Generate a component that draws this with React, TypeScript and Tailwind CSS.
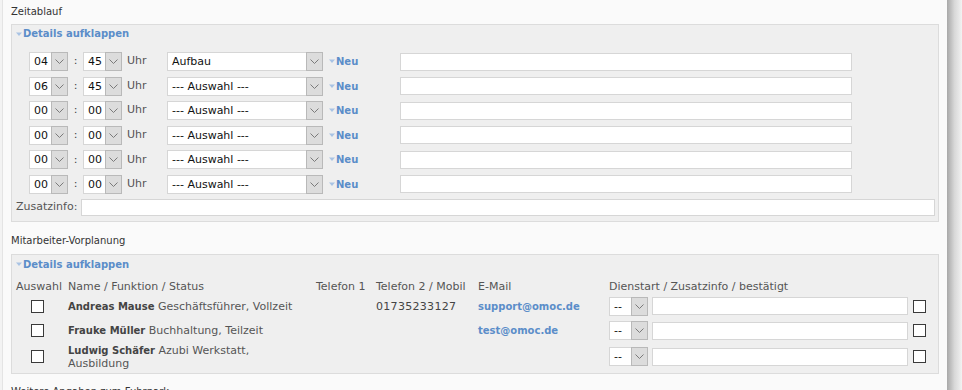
import React from "react";

const Chevron = () => (
  <svg width="9" height="5" viewBox="0 0 9 5" fill="none">
    <path d="M0.5 0.5 L4.5 4.5 L8.5 0.5" stroke="#7a7a7a" strokeWidth="1" />
  </svg>
);

function Sel({ w, text, h = 19 }: { w: number; text: string; h?: number }) {
  return (
    <div
      className="flex shrink-0 border border-[#d6d6d6] bg-white"
      style={{ width: w, height: h }}
    >
      <span className="flex-1 pl-[4px] text-[11px] leading-[17px] text-[#111] whitespace-nowrap overflow-hidden">
        {text}
      </span>
      <div className="w-[17px] -my-px -mr-px flex items-center justify-center border border-[#b9b9b9] bg-[#dcdcdc]">
        <Chevron />
      </div>
    </div>
  );
}

const Arrow = () => (
  <svg width="6" height="5" viewBox="0 0 6 5" className="mr-[1px]">
    <path d="M0 0.5 L3 4 L6 0.5 Z" fill="#a9c3e4" />
  </svg>
);

function Details() {
  return (
    <div className="flex items-center h-[12px] text-[10px] font-bold leading-[12px] text-[#5b8dc9]">
      <Arrow />
      <span>Details aufklappen</span>
    </div>
  );
}

const Box = () => (
  <div className="w-[13px] h-[13px] shrink-0 border border-[#3a3a3a] bg-white" />
);

const timeRows = [
  ["04", "45", "Aufbau"],
  ["06", "45", "--- Auswahl ---"],
  ["00", "00", "--- Auswahl ---"],
  ["00", "00", "--- Auswahl ---"],
  ["00", "00", "--- Auswahl ---"],
  ["00", "00", "--- Auswahl ---"],
];

const people = [
  { name: "Andreas Mause", role: "Geschäftsführer, Vollzeit", tel2: "01735233127", mail: "support@omoc.de" },
  { name: "Frauke Müller", role: "Buchhaltung, Teilzeit", tel2: "", mail: "test@omoc.de" },
  { name: "Ludwig Schäfer", role: "Azubi Werkstatt,", role2: "Ausbildung", tel2: "", mail: "" },
];

export default function App() {
  return (
    <div className="flex w-[962px] h-[390px] overflow-hidden bg-[#fafafa] font-['DejaVu_Sans','Verdana',sans-serif] text-[#444]">
      <div className="w-[3px] shrink-0 bg-[#f3f3f3] border-r border-[#e4e4e4]" />
      <div className="w-[944px] shrink-0 pl-[8px] pr-[8px]">
        <div className="pt-[6px] h-[12px] box-content text-[10px] leading-[12px] text-[#333]">Zeitablauf</div>
        <div className="mt-[6px] border border-[#dcdcdc] bg-[#efefef] pl-[4px] pr-[3px] pt-[3px] pb-[5px]">
          <Details />
          <div className="mt-[12px] ml-[13px] flex flex-col gap-[5.6px]">
            {timeRows.map((r, i) => (
              <div key={i} className="flex items-center h-[19px]">
                <Sel w={39} text={r[0]} />
                <span className="w-[15px] text-center text-[11px] text-[#444]">:</span>
                <Sel w={39} text={r[1]} />
                <span className="w-[45px] pl-[5px] text-[11px] text-[#555]">Uhr</span>
                <Sel w={156} text={r[2]} />
                <div className="ml-[6px] w-[71px] flex items-center text-[10px] font-bold text-[#5b8dc9]">
                  <Arrow />
                  <span>Neu</span>
                </div>
                <div className="w-[452px] h-[18px] border border-[#d6d6d6] bg-white" />
              </div>
            ))}
          </div>
          <div className="mt-[5px] flex items-center h-[17px]">
            <span className="w-[65px] text-[11px] text-[#555]">Zusatzinfo:</span>
            <div className="flex-1 h-[17px] border border-[#d6d6d6] bg-white" />
          </div>
        </div>

        <div className="mt-[13px] h-[12px] text-[10px] leading-[12px] text-[#333]">Mitarbeiter-Vorplanung</div>
        <div className="mt-[7px] border border-[#dcdcdc] bg-[#efefef] pl-[4px] pr-[3px] pt-[4px] pb-[4px]">
          <Details />
          <div className="mt-[9px] flex h-[13px] text-[11px] leading-[13px] text-[#555] whitespace-nowrap">
            <span className="w-[52px]">Auswahl</span>
            <span className="w-[248px]">Name / Funktion / Status</span>
            <span className="w-[60px]">Telefon 1</span>
            <span className="w-[102px]">Telefon 2 / Mobil</span>
            <span className="w-[131px]">E-Mail</span>
            <span>Dienstart / Zusatzinfo / bestätigt</span>
          </div>
          <div className="mt-[1px] flex flex-col">
            {people.map((p, i) => (
              <div key={i} className={`flex items-center text-[11px] leading-[13px] ${i === 2 ? "h-[26px] pt-[2px]" : "h-[24.5px]"}`}>
                <div className="w-[52px] pl-[15px]">
                  <Box />
                </div>
                <div className="w-[248px] text-[#555]">
                  <span className="font-bold text-[10px] text-[#444]">{p.name}</span> {p.role}
                  {p.role2 && (
                    <>
                      <br />
                      {p.role2}
                    </>
                  )}
                </div>
                <div className="w-[60px]" />
                <div className="w-[102px] text-[#444] tracking-[0.3px]">{p.tel2}</div>
                <div className="w-[131px] font-bold text-[10px] text-[#5b8dc9]">{p.mail}</div>
                <div className="flex items-center">
                  <Sel w={39} text="--" />
                  <div className="ml-[4px] w-[256px] h-[18px] border border-[#d6d6d6] bg-white" />
                  <div className="ml-[5px]">
                    <Box />
                  </div>
                </div>
              </div>
            ))}
          </div>
        </div>
        <div className="mt-[12px] h-[12px] text-[10px] leading-[12px] text-[#333]">Weitere Angaben zum Fuhrpark</div>
      </div>
      <div className="w-[15px] shrink-0 bg-gradient-to-r from-[#a8a8a8] via-[#d8d8d8] to-[#f2f2f2]" />
    </div>
  );
}
